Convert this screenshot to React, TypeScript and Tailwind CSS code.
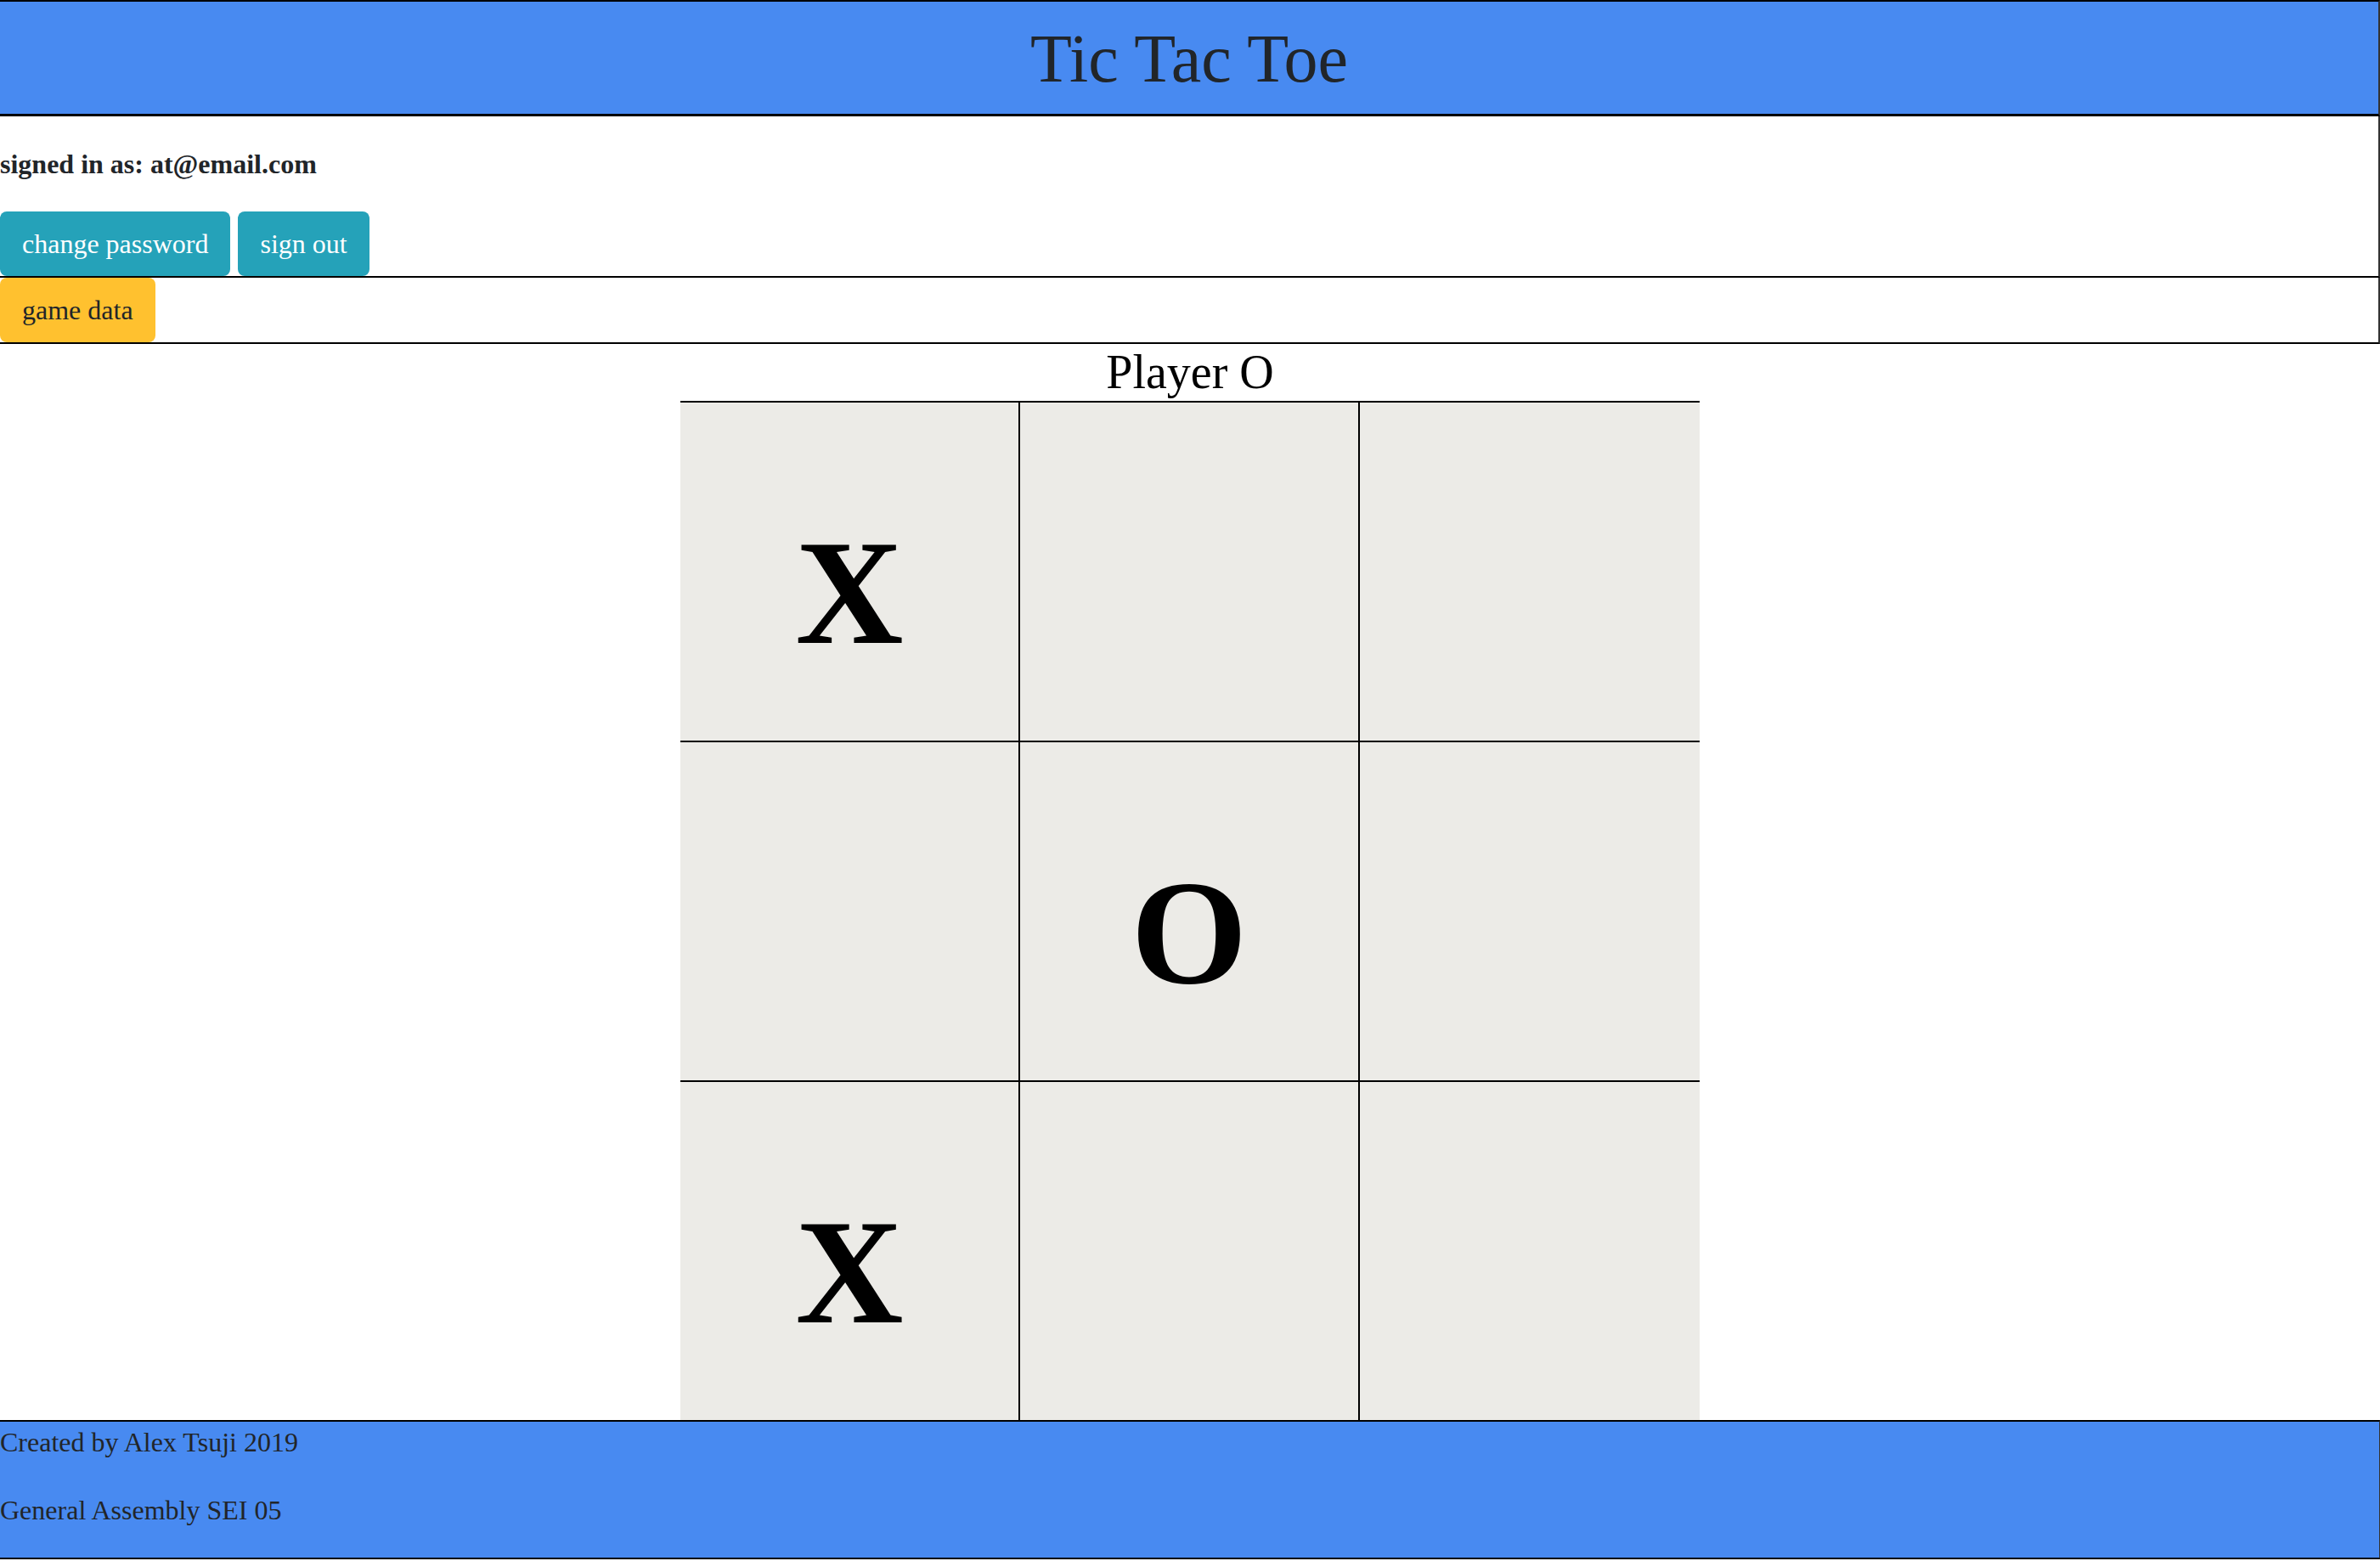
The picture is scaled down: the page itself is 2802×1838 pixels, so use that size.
import React from "react";

const board: string[] = ["X", "", "", "", "O", "", "X", "", ""];

export default function App() {
  return (
    <div className="min-h-screen bg-white font-['Liberation_Serif','Times_New_Roman',serif] text-[#212529]">
      {/* Header */}
      <header className="border-t-2 border-b-[3px] border-r-2 border-black border-r-[#333] bg-[#488af1] pt-[19px] pb-[17px] text-center">
        <h1 className="text-[80px] leading-[96px] font-normal">Tic Tac Toe</h1>
      </header>

      {/* Account */}
      <section className="border-b-2 border-r-2 border-black border-r-[#333] pt-[32px]">
        <p className="mb-[32px] text-[32px] leading-[48px] font-bold">
          signed in as: at@email.com
        </p>
        <div className="flex gap-[9px]">
          <button className="h-[76px] rounded-[8px] bg-[#25a2b9] px-[26px] text-[32px] leading-[48px] text-white">
            change password
          </button>
          <button className="h-[76px] rounded-[8px] bg-[#25a2b9] px-[26px] text-[32px] leading-[48px] text-white">
            sign out
          </button>
        </div>
      </section>

      {/* Game data */}
      <section className="border-b-2 border-r-2 border-black border-r-[#333]">
        <button className="h-[76px] rounded-[8px] bg-[#ffc12f] px-[26px] text-[32px] leading-[48px] text-[#212529]">
          game data
        </button>
      </section>

      <h3 className="text-center text-[56px] leading-[67px] text-black">Player O</h3>

      {/* Board */}
      <div className="mx-auto grid w-[1200px] grid-cols-3">
        {board.map((mark, i) => (
          <div
            key={i}
            className={
              i % 3 === 2
                ? "flex h-[400px] items-center justify-center border-t-2 border-black bg-[#ecebe7] pt-[50px] text-[176px] leading-none font-bold text-black"
                : "flex h-[400px] items-center justify-center border-t-2 border-r-2 border-black bg-[#ecebe7] pt-[50px] text-[176px] leading-none font-bold text-black"
            }
          >
            {mark}
          </div>
        ))}
      </div>

      {/* Footer */}
      <footer className="border-t-2 border-b-2 border-r border-black border-r-[#333] bg-[#488af1]">
        <p className="mb-[32px] text-[32px] leading-[48px]">Created by Alex Tsuji 2019</p>
        <p className="mb-[32px] text-[32px] leading-[48px]">General Assembly SEI 05</p>
      </footer>
    </div>
  );
}
